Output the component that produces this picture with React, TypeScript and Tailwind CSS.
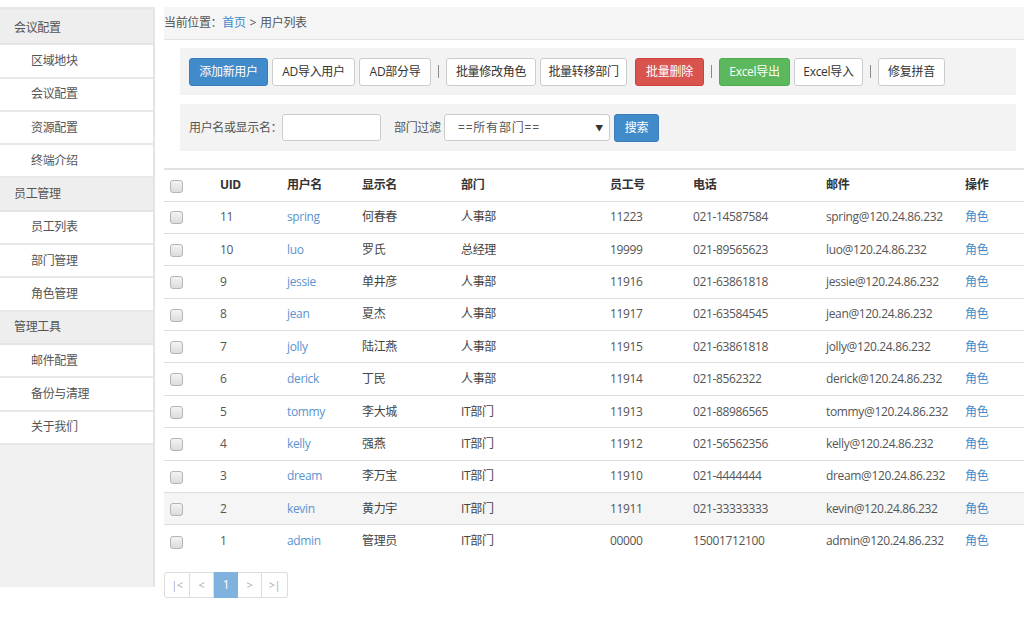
import React from 'react';

const menu = [
  { title: '会议配置', items: ['区域地块', '会议配置', '资源配置', '终端介绍'] },
  { title: '员工管理', items: ['员工列表', '部门管理', '角色管理'] },
  { title: '管理工具', items: ['邮件配置', '备份与清理', '关于我们'] },
];

const users = [
  ['11', 'spring', '何春春', '人事部', '11223', '021-14587584'],
  ['10', 'luo', '罗氏', '总经理', '19999', '021-89565623'],
  ['9', 'jessie', '单井彦', '人事部', '11916', '021-63861818'],
  ['8', 'jean', '夏杰', '人事部', '11917', '021-63584545'],
  ['7', 'jolly', '陆江燕', '人事部', '11915', '021-63861818'],
  ['6', 'derick', '丁民', '人事部', '11914', '021-8562322'],
  ['5', 'tommy', '李大城', 'IT部门', '11913', '021-88986565'],
  ['4', 'kelly', '强燕', 'IT部门', '11912', '021-56562356'],
  ['3', 'dream', '李万宝', 'IT部门', '11910', '021-4444444'],
  ['2', 'kevin', '黄力宇', 'IT部门', '11911', '021-33333333'],
  ['1', 'admin', '管理员', 'IT部门', '00000', '15001712100'],
];

function Box() {
  return <span className="inline-block w-[13px] h-[13px] rounded-[3px] border border-[#b5b5b5] bg-gradient-to-b from-[#f4f4f4] to-[#dcdcdc] align-middle" />;
}

function Btn({ children, tone = 'default', w }: { children: React.ReactNode; tone?: string; w: string }) {
  const cls =
    tone === 'primary'
      ? 'bg-[#428bca] border-[#3a7dbd] text-white'
      : tone === 'danger'
      ? 'bg-[#d9534f] border-[#d43f3a] text-white'
      : tone === 'success'
      ? 'bg-[#5cb85c] border-[#4cae4c] text-white'
      : 'bg-white border-[#cccccc] text-[#333]';
  return (
    <button className={`h-[28px] ${w} border rounded-[3px] text-[12px] tracking-[-0.3px] flex items-center justify-center shrink-0 ${cls}`}>
      {children}
    </button>
  );
}

function Sep() {
  return <span className="w-[1px] h-[13px] bg-[#888] mx-[3px] shrink-0" />;
}

export default function App() {
  return (
    <div className="w-[1024px] h-[618px] bg-white pt-[7px] flex text-[12px] tracking-[-0.35px] text-[#555] overflow-hidden" style={{ fontFamily: '"Open Sans", "Noto Sans CJK SC", sans-serif' }}>
      <aside className="w-[155px] h-[580px] shrink-0 bg-[#f0f0f0] border-r-2 border-[#e4e4e4] border-t-[3px] border-t-[#e8e8e8] pt-[2px]">
        {menu.map((g) => (
          <div key={g.title}>
            <div className="h-[33.3px] bg-[#eeeeee] border-b-2 border-[#e4e4e4] pl-[14px] flex items-center text-[#555]">{g.title}</div>
            {g.items.map((it) => (
              <div key={it} className="h-[33.3px] bg-white border-b-2 border-[#e8e8e8] pl-[31px] flex items-center text-[#555]">{it}</div>
            ))}
          </div>
        ))}
      </aside>

      <main className="ml-[9px] flex-1 min-w-0">
        <div className="h-[33px] bg-[#f5f5f5] border-b border-[#e3e3e3] flex items-center text-[#555]">
          当前位置：<span className="text-[#428bca]">首页</span>
          <span className="mx-[4px]">&gt;</span>用户列表
        </div>

        <div className="ml-[16px] mr-[8px] mt-[8px] h-[47px] bg-[#f3f3f3] flex items-center pl-[9px] gap-[4px]">
          <Btn tone="primary" w="w-[79px]">添加新用户</Btn>
          <Btn w="w-[83px]">AD导入用户</Btn>
          <Btn w="w-[72px]">AD部分导</Btn>
          <Sep />
          <Btn w="w-[90px]">批量修改角色</Btn>
          <Btn w="w-[87px]">批量转移部门</Btn>
          <Btn tone="danger" w="w-[69px] ml-[4px]">批量删除</Btn>
          <Sep />
          <Btn tone="success" w="w-[71px]">Excel导出</Btn>
          <Btn w="w-[69px]">Excel导入</Btn>
          <Sep />
          <Btn w="w-[67px]">修复拼音</Btn>
        </div>

        <div className="ml-[16px] mr-[8px] mt-[9px] h-[47px] bg-[#f3f3f3] flex items-center pl-[9px]">
          <span className="w-[93px] shrink-0 whitespace-nowrap text-[#555]">用户名或显示名：</span>
          <div className="w-[99px] h-[27px] shrink-0 bg-white border border-[#ccc] rounded-[3px]" />
          <span className="ml-[13px] w-[50px] shrink-0 whitespace-nowrap text-[#555]">部门过滤</span>
          <div className="w-[166px] h-[27px] shrink-0 bg-white border border-[#ccc] rounded-[3px] flex items-center justify-between pl-[13px] pr-[6px] text-[#555]">
            <span className="tracking-[0.8px]">==所有部门==</span>
            <span className="text-[8px] text-[#333]">▼</span>
          </div>
          <button className="ml-[4px] w-[45px] h-[28px] bg-[#428bca] border border-[#3a7dbd] rounded-[3px] text-white text-[12px] flex items-center justify-center">搜索</button>
        </div>

        <table className="mt-[17px] w-[860px] border-collapse border-t-2 border-[#e2e2e2] text-left">
          <thead>
            <tr className="h-[32px] border-b border-[#dddddd] text-[#333] font-bold">
              <th className="w-[56px] pl-[6px] font-normal"><Box /></th>
              <th className="w-[67px]">UID</th>
              <th className="w-[75px]">用户名</th>
              <th className="w-[99px]">显示名</th>
              <th className="w-[149px]">部门</th>
              <th className="w-[83px]">员工号</th>
              <th className="w-[133px]">电话</th>
              <th className="w-[139px]">邮件</th>
              <th>操作</th>
            </tr>
          </thead>
          <tbody>
            {users.map((u, i) => (
              <tr key={u[0]} className={`h-[32.4px] ${i < users.length - 1 ? 'border-b border-[#dddddd]' : ''} ${u[1] === 'kevin' ? 'bg-[#f5f5f5]' : ''}`}>
                <td className="pl-[6px]"><Box /></td>
                <td>{u[0]}</td>
                <td className="text-[#5b93cf]">{u[1]}</td>
                <td className="text-[#444]">{u[2]}</td>
                <td className="text-[#444]">{u[3]}</td>
                <td>{u[4]}</td>
                <td>{u[5]}</td>
                <td className="whitespace-nowrap">{u[1]}@120.24.86.232</td>
                <td className="text-[#428bca]">角色</td>
              </tr>
            ))}
          </tbody>
        </table>

        <div className="mt-[15px] flex h-[26px] text-[11px] text-[#aaa]">
          <span className="w-[26px] border border-[#ddd] rounded-l-[3px] flex items-center justify-center">|&lt;</span>
          <span className="w-[24px] border-y border-r border-[#ddd] flex items-center justify-center">&lt;</span>
          <span className="w-[24px] bg-[#7fb2de] text-white flex items-center justify-center text-[12px]">1</span>
          <span className="w-[24px] border-y border-r border-[#ddd] flex items-center justify-center">&gt;</span>
          <span className="w-[26px] border-y border-r border-[#ddd] rounded-r-[3px] flex items-center justify-center">&gt;|</span>
        </div>
      </main>
    </div>
  );
}
